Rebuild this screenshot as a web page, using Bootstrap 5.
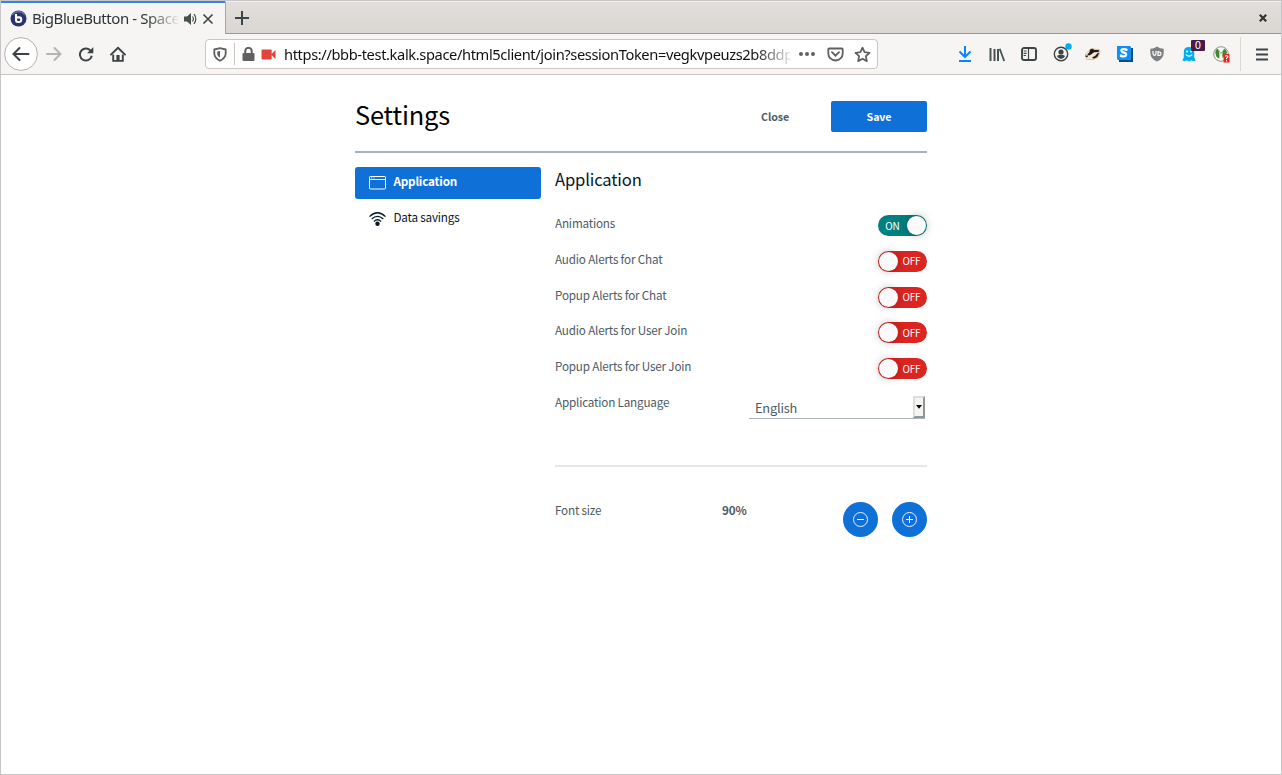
<!DOCTYPE html>
<html lang="en">
<head>
<meta charset="utf-8">
<meta name="viewport" content="width=device-width, initial-scale=1">
<title>BigBlueButton - Settings</title>
<link href="https://cdn.jsdelivr.net/npm/bootstrap@5.3.0/dist/css/bootstrap.min.css" rel="stylesheet">
<style>
  :root { --ui: "Noto Sans", "Open Sans", sans-serif; --app: "Noto Sans CJK SC", "Noto Sans", sans-serif; --blue: #0f70d7; --ink: #4e5a66; }
  body { margin: 0; font-family: var(--app); background: #fff; }
  svg { display: block; flex: none; }
  .window { width: 1282px; height: 775px; border: 1px solid #c6c6c6; overflow: hidden; }
  /* browser frame */
  .tabstrip { height: 33px; background: linear-gradient(#e1dedb, #dad6d2); font-family: var(--ui); }
  .tab-item { width: 224px; height: 33px; background: #f6f5f4; border-top: 2px solid #3584e4; padding-left: 9px; }
  .tab-title { width: 146px; margin-left: 5px; font-size: 15px; letter-spacing: -.43px; line-height: 31px; color: #2e3436; white-space: nowrap; overflow: hidden; -webkit-mask-image: linear-gradient(90deg, #000 78%, transparent 102%); mask-image: linear-gradient(90deg, #000 78%, transparent 102%); }
  .strip-rest { border-left: 1px solid #a9a7a5; border-bottom: 1px solid #9a9794; border-top: 1px solid #f3f1f0; }
  .toolbar { height: 41px; background: #f6f5f4; border-bottom: 1px solid #c9c6c2; padding-left: 3px; }
  .cell { width: 32px; height: 40px; display: flex; align-items: center; justify-content: center; flex: none; }
  .urlbox { width: 673px; height: 30px; margin-left: 71px; background: #fff; border: 1px solid #cbc6c0; border-radius: 4px; }
  .urltext { width: 506px; margin-left: 8px; font-family: var(--ui); font-size: 14.67px; letter-spacing: -.38px; line-height: 28px; color: #111; white-space: nowrap; overflow: hidden; -webkit-mask-image: linear-gradient(90deg, #000 93%, transparent 101%); mask-image: linear-gradient(90deg, #000 93%, transparent 101%); }
  .count { left: 18px; top: 6px; width: 14px; height: 11px; font: 10px/11px "DejaVu Sans", sans-serif; background: #4a1a4a; color: #fff; border-radius: 1px; text-align: center; }
  /* settings dialog */
  .dialog { width: 572px; margin-left: 354px; padding-top: 26px; }
  .dialog-head { height: 52px; border-bottom: 2px solid #a7b3bd; }
  .dialog-title { font-size: 25.4px; letter-spacing: -.15px; line-height: 32px; font-weight: 400; margin: -3px 0 0; color: #000; }
  .action { font-size: 10.7px; letter-spacing: -.1px; font-weight: 700; line-height: 15px; height: 31px; width: 96px; padding: 0; border: 0; border-radius: 2px; color: var(--ink); }
  .action-main, .action-main:hover { background: var(--blue); color: #fff; }
  .side { width: 186px; }
  .side .nav-link { height: 32px; padding: 0 0 0 14px; color: #06172a; font-size: 11.7px; letter-spacing: -.19px; line-height: 30px; border-radius: 3px; margin-bottom: 4px; }
  .side .nav-link span { margin-top: -5px; margin-left: -.6px; }
  .side .nav-link.active { background: var(--blue); color: #fff; font-weight: 700; }
  .panel { width: 372px; margin-left: 14px; color: var(--ink); font-size: 11.7px; letter-spacing: -.19px; }
  .panel-title { font-size: 16.6px; letter-spacing: -.15px; line-height: 25px; height: 46px; font-weight: 400; color: #06172a; margin: 0; }
  .setting { height: 35.8px; line-height: 20px; }
  .toggle { width: 49px; height: 21px; border-radius: 11px; background: #dc2520; color: #fff; font-size: 10px; line-height: 19px; padding: 0 1px; margin-top: 2px; }
  .toggle.on { background: #008081; }
  .toggle.on .knob { margin-left: 1px; }
  .knob { width: 19px; height: 19px; border-radius: 50%; background: #fafafa; box-shadow: 0 0 8px rgba(0,0,0,.3); }
  .tog-label { width: 27px; height: 20px; text-align: center; }
  .lang { width: 176px; height: 23px; margin: 4px 2px 0 0; border-bottom: 1px solid #a7b3bd; font-size: 12.8px; line-height: 24px; padding-left: 6px; }
  .drop { width: 12px; height: 22px; background: #f6f5f4; border: 2px solid; border-color: #dededd #929595 #929595 #dededd; }
  .divide { height: 2px; background: #e5e8eb; }
  .font-row { padding-top: 35px; }
  .font-row span, .font-row b { line-height: 16px; }
  .round { width: 35px; height: 35px; border-radius: 50%; background: var(--blue); border: 0; padding: 0; }
</style>
</head>
<body>
<div class="window">
  <div class="tabstrip d-flex">
    <div class="tab-item d-flex align-items-center">
      <svg width="17" height="17" viewBox="0 0 17 17"><circle cx="8.5" cy="8.5" r="8" fill="#283274"/><path d="M2 5a8 8 0 0 1 13 0" fill="none" stroke="#6670a5" stroke-width="1.5"/><path d="M6 4v6q0 2 2 2h1.200q2 0 2-2v-.8q0-1.800-2-1.800H6.800" fill="none" stroke="#fff" stroke-width="2.100"/></svg>
      <div class="tab-title">BigBlueButton - Spaces</div>
      <svg style="margin-left:5px" width="15" height="14" viewBox="0 0 15 14"><path d="M1 4.500h3L8 1v12L4 9.500H1z" fill="#4a4f50"/><path d="M9.500 4.500q1.800 2.500 0 5M11 2.200q3.600 4.800 0 9.600" fill="none" stroke="#4a4f50" stroke-width="1.200"/></svg>
      <svg class="ms-1" width="12" height="12" viewBox="0 0 12 12"><path d="M1.500 1.500l9 9m0-9l-9 9" stroke="#3c4446" stroke-width="1.600"/></svg>
    </div>
    <div class="strip-rest flex-fill d-flex align-items-center justify-content-between">
      <svg class="ms-2" width="16" height="16" viewBox="0 0 16 16"><path d="M8 1v14M1 8h14" stroke="#3c4446" stroke-width="2"/></svg>
      <svg width="8" height="8" viewBox="0 0 8 8" style="margin-right:14px;margin-top:1px"><path d="M.8.8l6.400 6.400m0-6.400L.8 7.200" stroke="#2e3436" stroke-width="2.200"/></svg>
    </div>
  </div>
  <div class="toolbar d-flex align-items-center">
    <div class="cell" style="width:34px"><svg width="34" height="34" viewBox="0 0 34 34"><circle cx="17" cy="17" r="16.400" fill="#fff" stroke="#b3b1af"/><path d="M24.500 17H10M15.500 11L9.500 17l6 6" fill="none" stroke="#3c4446" stroke-width="2" stroke-linecap="round"/></svg></div>
    <div class="cell"><svg width="16" height="16" viewBox="0 0 16 16"><path d="M1 8h13M8.500 2L14.500 8l-6 6" fill="none" stroke="#b3b4b4" stroke-width="2" stroke-linecap="round"/></svg></div>
    <div class="cell"><svg width="16" height="16" viewBox="0 0 16 16"><path d="M13 5.300A6 6 0 1 0 13.800 9.800" fill="none" stroke="#3c4446" stroke-width="2"/><path d="M15.300 1v6.200H9.100z" fill="#3c4446"/></svg></div>
    <div class="cell"><svg width="16" height="16" viewBox="0 0 16 16"><path d="M1 8.600L8 1.700l7 6.900" fill="none" stroke="#3c4446" stroke-width="1.900" stroke-linecap="round" stroke-linejoin="round"/><path d="M3.200 8.500v6.400h9.600V8.500" fill="none" stroke="#3c4446" stroke-width="1.900"/><path d="M6.400 9h3.200v6H6.400z" fill="#3c4446"/></svg></div>
    <div class="urlbox d-flex align-items-center">
      <svg style="margin-left:7px" width="14" height="15" viewBox="0 0 14 15"><path d="M7 1.200L12.700 2.500V6.500Q12.500 11 7 13.800Q1.500 11 1.300 6.500V2.500z" fill="none" stroke="#606060" stroke-width="1.800" stroke-linejoin="round"/><path d="M7 4L4.200 4.600V7Q4.300 9.200 7 10.800z" fill="#606060"/></svg>
      <div style="width:1px;height:22px;background:#cbc6c0;margin-left:7px"></div>
      <svg style="margin-left:7px" width="13" height="14" viewBox="0 0 13 14"><path d="M3.300 7V4a3.200 3.200 0 0 1 6.400 0v3" fill="none" stroke="#606060" stroke-width="2"/><rect x=".5" y="6" width="12" height="8" rx="1" fill="#606060"/></svg>
      <svg style="margin-left:6px" width="15" height="11" viewBox="0 0 15 11"><rect x=".5" y=".5" width="10.200" height="10" rx="1" fill="#e2443b"/><path d="M10 5.500L14.500 1v9z" fill="#e2443b"/></svg>
      <div class="urltext">https://bbb-test.kalk.space/html5client/join?sessionToken=vegkvpeuzs2b8ddp</div>
      <svg style="margin-left:8px" width="18" height="6" viewBox="0 0 18 6"><g fill="#606060"><circle cx="3" cy="3" r="2"/><circle cx="9" cy="3" r="2"/><circle cx="15" cy="3" r="2"/></g></svg>
      <svg style="margin-left:11px" width="17" height="15" viewBox="0 0 17 15"><path d="M2.200 1.500H14.800Q15.700 1.500 15.700 2.400V6.500A7.200 7 0 0 1 1.300 6.500V2.400Q1.300 1.500 2.200 1.500z" fill="none" stroke="#606060" stroke-width="1.800"/><path d="M5 5.200L8.500 8.700 12 5.200" fill="none" stroke="#606060" stroke-width="1.900" stroke-linecap="round"/></svg>
      <svg style="margin-left:10px" width="17" height="17" viewBox="0 0 17 17"><path d="M8.500 1.700L10.600 6.200 15.500 6.800 11.900 10.200 12.800 15.100 8.500 12.700 4.200 15.100 5.100 10.200 1.500 6.800 6.400 6.200z" fill="none" stroke="#606060" stroke-width="1.800" stroke-linejoin="round"/></svg>
    </div>
    <div class="cell" style="margin-left:71px"><svg width="14" height="16" viewBox="0 0 14 16"><path d="M7 0v10.500M1.500 5.500L7 11l5.500-5.500M1 15h12" fill="none" stroke="#0a84ff" stroke-width="2"/></svg></div>
    <div class="cell"><svg width="16" height="15" viewBox="0 0 16 15"><path d="M1.500 1v13M5.500 2v12M9 2v12" stroke="#4a5152" stroke-width="2"/><path d="M10.700 1.700l4.500 12.300" stroke="#4a5152" stroke-width="1.800"/></svg></div>
    <div class="cell"><svg width="16" height="14" viewBox="0 0 16 14"><rect x="1" y="1" width="14" height="12" rx="2" fill="none" stroke="#3c4446" stroke-width="1.900"/><path d="M7.500 1v12M2.600 4h3M2.600 6.300h3M2.600 8.500h2.400" stroke="#3c4446" stroke-width="1.200"/></svg></div>
    <div class="cell position-relative"><svg width="16" height="16" viewBox="0 0 16 16"><circle cx="8" cy="8" r="6.700" fill="none" stroke="#3c4446" stroke-width="1.400"/><circle cx="8" cy="6" r="2.600" fill="#3c4446"/><path d="M3.800 10q4.200-2.600 8.400 0Q10.500 12.900 8 12.900T3.800 10z" fill="#3c4446"/></svg><svg class="position-absolute" style="left:20px;top:9px" width="7" height="7" viewBox="0 0 7 7"><circle cx="3.500" cy="3.500" r="3.200" fill="#00acf5"/></svg></div>
    <div class="cell"><svg width="18" height="14" viewBox="0 0 18 14"><path d="M1.500 7L5 3.500 7 1.500l3 .5 5.500.5.500 3-2.200 5-4.500 2L3 12.500 1.500 10z" fill="#f6e6d4" stroke="#e5a56e" stroke-width=".7"/><path d="M6 2.500l2.500-.8 2 1.300 4.500 0-.5 2-4.500.3-4 3H3L5.500 5zM8 10.500l3-1.500 3.200-3.500.8 1-1.800 3.500-3.500 1.800z" fill="#1d1a19"/><path d="M1.600 8.500l2.500.2-.8 1.600-1.500-.3z" fill="#1d1a19"/></svg></div>
    <div class="cell"><svg width="16" height="16" viewBox="0 0 16 16"><path d="M2 2h14v14H2z" fill="#074a86"/><path d="M0 0h13l1 1v13H1l-1-1z" fill="#0e91f7"/><path d="M9.300 5V3.600Q6.800 2.600 5.200 3.400 3.600 4.800 5.400 6.100L8.200 7.200Q10 8.600 8.300 10 6.200 10.900 4 9.900V8.400" fill="none" stroke="#fff" stroke-width="2.300"/></svg></div>
    <div class="cell"><svg width="16" height="16" viewBox="0 0 16 16"><path d="M8 .5Q11 2.800 14.700 2.800V7Q14.500 12.500 8 15.600Q1.500 12.500 1.300 7V2.800Q5 2.800 8 .5z" fill="#7d7f80"/><path d="M4 5v2.600q0 1.700 1.500 1.700T7 7.600V5M9 5v4.300h1.300q1.700 0 1.700-1.600T10.300 6.200H9" fill="none" stroke="#fff" stroke-width="1.200"/></svg></div>
    <div class="cell position-relative"><svg width="14" height="16" viewBox="0 0 14 16"><path d="M1.800 6Q1.800 1 7 1T12.200 6v5.500l1.500 3-2.700.7-1.600-1-2.400 1.300-2.400-1.300-1.600 1-2.700-.7 1.500-3z" fill="#00aef0"/><circle cx="5.100" cy="5.500" r="1.100" fill="#fff"/><circle cx="8.900" cy="5.500" r="1.100" fill="#fff"/><path d="M3.800 8.600q3.200 3 6.400 0" fill="none" stroke="#fff" stroke-width="1.200"/></svg><span class="count position-absolute">0</span></div>
    <div class="cell"><svg width="17" height="17" viewBox="0 0 17 17"><circle cx="8" cy="8" r="7.300" fill="#f5faf2" stroke="#8e938c"/><path d="M2.300 6Q3 2.800 5 2.800 6.800 6 6.300 12.500 2.500 11.500 2.300 6zM9.500 12Q8.800 6 11 2.800q2.500.5 3 4.200z" fill="#3b8a32"/><path d="M5.500 4l2.500 3.500L10.500 4" fill="none" stroke="#87b47e"/><rect x="10.500" y="8" width="6" height="8.500" fill="#ef1c1c"/><path d="M12 10.300q1.500-1.400 3 0 0 1-1.500 2v1M13.500 14.200v1.200" fill="none" stroke="#fff" stroke-width="1.100"/></svg></div>
    <div style="width:1px;height:34px;background:#dbd8d5;margin-left:3px"></div>
    <div class="cell" style="margin-left:5px"><svg width="12" height="13" viewBox="0 0 12 13"><path d="M0 1.500h12M0 6.500h12M0 11.500h12" stroke="#3c4446" stroke-width="2"/></svg></div>
  </div>

  <main class="dialog">
    <header class="dialog-head d-flex align-items-start">
      <h1 class="dialog-title me-auto">Settings</h1>
      <button class="btn action" style="margin-right:8px">Close</button>
      <button class="btn action action-main">Save</button>
    </header>
    <div class="d-flex" style="padding-top:14px">
      <nav class="side nav flex-column">
        <a class="nav-link active d-flex align-items-center" href="#"><svg width="17" height="14" viewBox="0 0 17 14" style="margin-right:8px"><rect x=".5" y=".5" width="16" height="12.500" rx=".7" fill="none" stroke="#fff"/><path d="M.5 3.500h16" stroke="#fff" stroke-width=".9"/><path d="M2 2h4" stroke="#fff" stroke-width=".7" stroke-dasharray="1 .7"/></svg><span>Application</span></a>
        <a class="nav-link d-flex align-items-center" href="#"><svg width="17" height="14" viewBox="0 0 17 14" style="margin-right:8px"><path d="M.5 4.600Q8.500-3 16.500 4.600M2.700 7.100q5.800-5.400 11.600 0M4.900 9.400q3.600-3.200 7.200 0" fill="none" stroke="#06172a" stroke-width="1.300"/><circle cx="8.500" cy="11.700" r="2.200" fill="#06172a"/></svg><span>Data savings</span></a>
      </nav>
      <section class="panel">
        <h2 class="panel-title">Application</h2>
        <div class="setting d-flex justify-content-between"><span>Animations</span><div class="toggle on d-flex align-items-center"><span class="tog-label">ON</span><span class="knob"></span></div></div>
        <div class="setting d-flex justify-content-between"><span>Audio Alerts for Chat</span><div class="toggle d-flex align-items-center"><span class="knob"></span><span class="tog-label">OFF</span></div></div>
        <div class="setting d-flex justify-content-between"><span>Popup Alerts for Chat</span><div class="toggle d-flex align-items-center"><span class="knob"></span><span class="tog-label">OFF</span></div></div>
        <div class="setting d-flex justify-content-between"><span>Audio Alerts for User Join</span><div class="toggle d-flex align-items-center"><span class="knob"></span><span class="tog-label">OFF</span></div></div>
        <div class="setting d-flex justify-content-between"><span>Popup Alerts for User Join</span><div class="toggle d-flex align-items-center"><span class="knob"></span><span class="tog-label">OFF</span></div></div>
        <div class="setting d-flex justify-content-between" style="height:73px"><span>Application Language</span><div class="lang d-flex justify-content-between"><span>English</span><span class="drop d-flex align-items-center justify-content-center"><svg width="6" height="4" viewBox="0 0 6 4"><path d="M0 0h6L3 3.800z"/></svg></span></div></div>
        <div class="divide"></div>
        <div class="font-row d-flex">
          <span style="width:167px">Font size</span><b class="me-auto">90%</b>
          <button class="btn round d-flex align-items-center justify-content-center" style="margin-right:14px"><svg width="15" height="15" viewBox="0 0 15 15"><circle cx="7.500" cy="7.500" r="7" fill="none" stroke="#fff" stroke-width=".9"/><path d="M4 7.500h7" stroke="#fff"/></svg></button>
          <button class="btn round d-flex align-items-center justify-content-center"><svg width="15" height="15" viewBox="0 0 15 15"><circle cx="7.500" cy="7.500" r="7" fill="none" stroke="#fff" stroke-width=".9"/><path d="M4 7.500h7M7.500 4v7" stroke="#fff"/></svg></button>
        </div>
      </section>
    </div>
  </main>
</div>
<script src="https://cdn.jsdelivr.net/npm/bootstrap@5.3.0/dist/js/bootstrap.bundle.min.js"></script>
</body>
</html>
